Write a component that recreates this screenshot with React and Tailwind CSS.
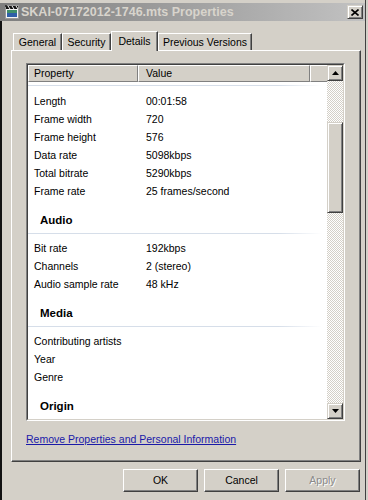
import React from "react";

const raised =
  "border-t border-l border-t-white border-l-white border-r border-b border-r-[#404040] border-b-[#404040] shadow-[inset_-1px_-1px_0_#808080]";
const sbtn =
  "border border-t-[#d4d0c8] border-l-[#d4d0c8] border-r-[#404040] border-b-[#404040] shadow-[inset_1px_1px_0_#fff,inset_-1px_-1px_0_#808080] bg-[#d4d0c8]";
const checker =
  "bg-[image:repeating-conic-gradient(#ffffff_0%_25%,#d4d0c8_0%_50%)] bg-[length:2px_2px]";

function Row({ p, v }) {
  return (
    <div className="flex h-[18px] items-center whitespace-nowrap">
      <div className="w-[110px] pl-[6px]">{p}</div>
      <div className="pl-[8px]">{v}</div>
    </div>
  );
}

function Sep() {
  return <div className="h-px w-[294px] bg-linear-to-r from-[#d6dee9] from-85% to-white" />;
}

function Group({ t }) {
  return (
    <div>
      <div className="h-[28px] pt-[13px] pl-[12px] font-bold text-[11.5px] leading-[14px]">{t}</div>
      <div className="h-[5px]" />
      <Sep />
      <div className="h-[5px]" />
    </div>
  );
}

function Tab({ w, label, sel }) {
  if (sel) {
    return (
      <div
        className={`relative z-10 -mb-px h-[20px] ${w} flex items-start justify-center pt-[3px] bg-[#d4d0c8] border-t border-l border-t-white border-l-white border-r border-r-[#404040] shadow-[inset_-1px_0_0_#808080]`}
      >
        {label}
      </div>
    );
  }
  return (
    <div
      className={`h-[17px] ${w} flex items-center justify-center bg-[#d4d0c8] border-t border-l border-t-white border-l-white border-r border-r-[#404040] shadow-[inset_-1px_0_0_#808080]`}
    >
      {label}
    </div>
  );
}

function Btn({ children, disabled }) {
  return (
    <div
      className={`w-[75px] h-[23px] flex items-center justify-center bg-[#d4d0c8] ${raised} ${
        disabled ? "text-[#8a8a8a] [text-shadow:1px_1px_0_#fff]" : ""
      }`}
    >
      {children}
    </div>
  );
}

export default function App() {
  return (
    <div className="w-[368px] h-[500px] bg-[#d4d0c8] overflow-hidden font-['Liberation_Sans',Arial,sans-serif] text-[10.5px] leading-[13px] text-black">
      <div className="w-[366px] h-[500px] border-r border-r-[#404040] flex flex-col pt-[3px]">
        {/* Title bar */}
        <div className="h-[18px] flex items-center bg-linear-to-r from-[#7e7e7e] to-[#c2c2c2] pl-[4px] pr-[2px]">
          <svg width="16" height="16" viewBox="0 0 16 16" className="shrink-0">
            <rect x="1.5" y="1.5" width="13" height="13" fill="#f4f4f4" stroke="#9a9a9a" />
            <rect x="3" y="6" width="10" height="7" fill="#3f8f6a" />
            <rect x="3" y="9" width="10" height="4" fill="#2f5fa8" />
            <rect x="2" y="2" width="12" height="3" fill="#111" />
            <path d="M4 2 L6 5 M8 2 L10 5 M12 2 L14 5" stroke="#fff" strokeWidth="1" />
            <path d="M1 1 L3 3 M3 1 L1 3" stroke="#222" strokeWidth="0.8" />
          </svg>
          <div className="ml-[1px] font-bold text-[12.5px] leading-[14px] text-[#d8d4cc] whitespace-nowrap">
            SKAI-07172012-1746.mts Properties
          </div>
          <div className="flex-1" />
          <div className={`w-[16px] h-[14px] flex items-center justify-center ${sbtn}`}>
            <svg width="8" height="7" viewBox="0 0 8 7">
              <path d="M0.5 0.5 L7.5 6.5 M7.5 0.5 L0.5 6.5" stroke="#000" strokeWidth="1.6" />
            </svg>
          </div>
        </div>

        {/* Body */}
        <div className="flex-1 flex flex-col border-l-2 border-l-[#111] pl-[9px] pt-[10px]">
          {/* Tabs */}
          <div className="h-[19px] flex items-end pl-[2px]">
            <Tab w="w-[49px]" label="General" />
            <Tab w="w-[49px]" label="Security" />
            <Tab w="w-[47px]" label="Details" sel />
            <Tab w="w-[94px]" label="Previous Versions" />
          </div>

          {/* Panel */}
          <div className="w-[350px] h-[412px] border-t border-l border-t-white border-l-white border-r border-b border-r-[#404040] border-b-[#404040] shadow-[inset_-1px_-1px_0_#808080] pl-[14px] pt-[12px]">
            {/* List */}
            <div className="w-[319px] h-[358px] flex border border-t-[#808080] border-l-[#808080] border-r-white border-b-white">
              <div className="flex-1 flex border border-t-[#404040] border-l-[#404040] border-r-[#d4d0c8] border-b-[#d4d0c8] bg-white">
                <div className="flex-1 flex flex-col min-w-0">
                  {/* header */}
                  <div className="h-[17px] flex bg-[#d4d0c8] shrink-0">
                    <div className="w-[110px] flex items-center pl-[5px] border-t border-l border-t-white border-l-white border-r border-b border-r-[#808080] border-b-[#808080]">
                      Property
                    </div>
                    <div className="w-[172px] flex items-center pl-[7px] border-t border-l border-t-white border-l-white border-r border-b border-r-[#808080] border-b-[#808080]">
                      Value
                    </div>
                    <div className="flex-1 border-t border-l border-t-white border-l-white border-b border-b-[#808080]" />
                  </div>
                  {/* content */}
                  <div className="flex-1 overflow-hidden bg-white">
                    <div className="h-[10px] pt-[3px]">
                      <Sep />
                    </div>
                    <Row p="Length" v="00:01:58" />
                    <Row p="Frame width" v="720" />
                    <Row p="Frame height" v="576" />
                    <Row p="Data rate" v="5098kbps" />
                    <Row p="Total bitrate" v="5290kbps" />
                    <Row p="Frame rate" v="25 frames/second" />
                    <Group t="Audio" />
                    <Row p="Bit rate" v="192kbps" />
                    <Row p="Channels" v="2 (stereo)" />
                    <Row p="Audio sample rate" v="48 kHz" />
                    <Group t="Media" />
                    <Row p="Contributing artists" v="" />
                    <Row p="Year" v="" />
                    <Row p="Genre" v="" />
                    <Group t="Origin" />
                  </div>
                </div>
                {/* scrollbar */}
                <div className="w-[16px] flex flex-col">
                  <div className={`h-[16px] flex items-center justify-center ${sbtn}`}>
                    <svg width="7" height="4" viewBox="0 0 7 4">
                      <path d="M3.5 0 L7 4 L0 4 Z" fill="#000" />
                    </svg>
                  </div>
                  <div className={`h-[41px] ${checker}`} />
                  <div className={`h-[91px] ${sbtn}`} />
                  <div className={`flex-1 ${checker}`} />
                  <div className={`h-[16px] flex items-center justify-center ${sbtn}`}>
                    <svg width="7" height="4" viewBox="0 0 7 4">
                      <path d="M0 0 L7 0 L3.5 4 Z" fill="#000" />
                    </svg>
                  </div>
                </div>
              </div>
            </div>
            {/* Link */}
            <div className="mt-[11px] leading-[14px] text-[#1a1aa8] underline whitespace-nowrap">
              Remove Properties and Personal Information
            </div>
          </div>

          {/* Buttons */}
          <div className="mt-[7px] flex justify-end gap-[6px] pr-[5px]">
            <Btn>OK</Btn>
            <Btn>Cancel</Btn>
            <Btn disabled>Apply</Btn>
          </div>
        </div>
      </div>
    </div>
  );
}
